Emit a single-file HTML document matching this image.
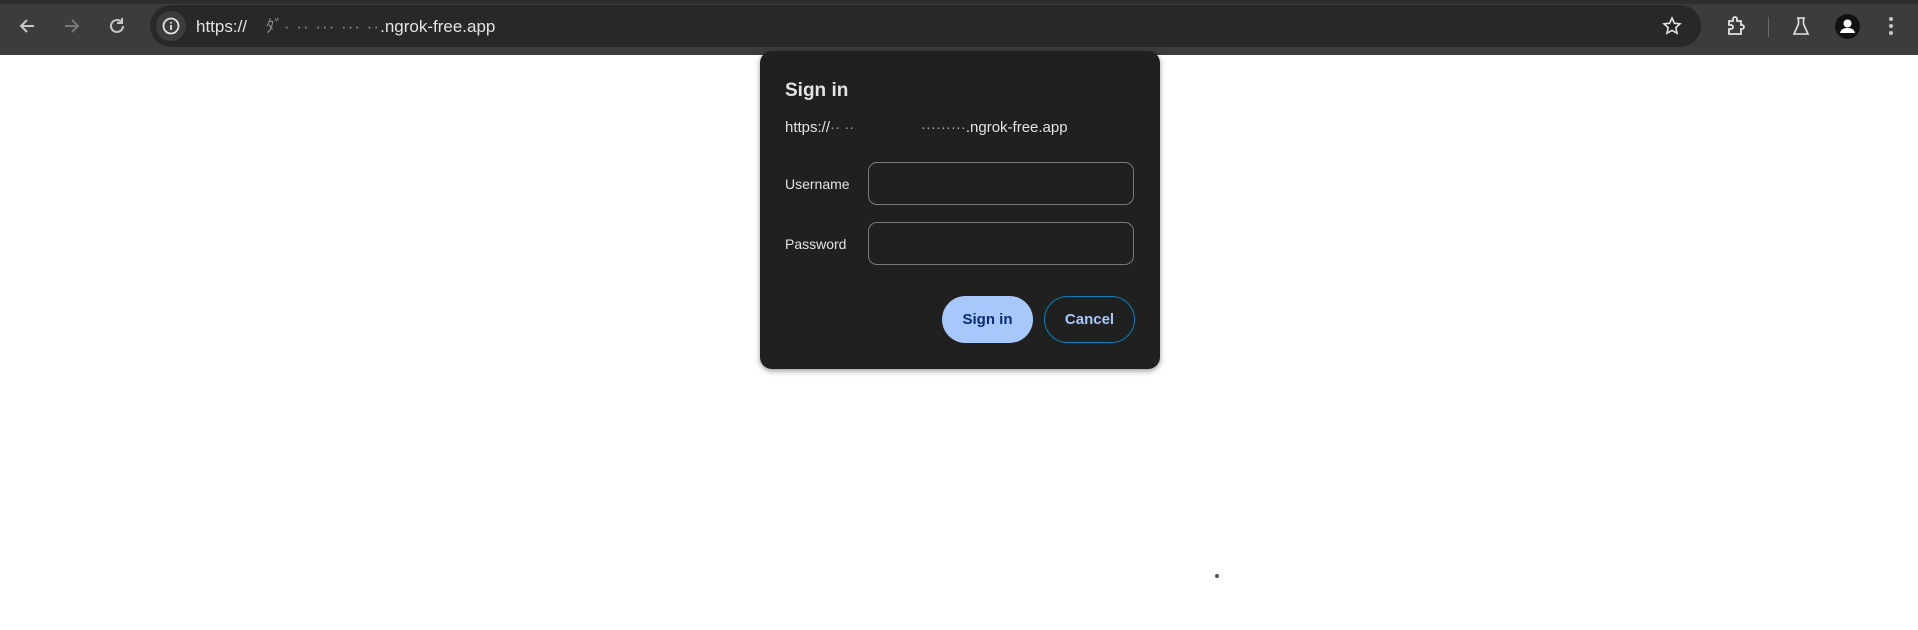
<!DOCTYPE html>
<html><head><style>
*{margin:0;padding:0;box-sizing:border-box}
body{width:1918px;height:630px;background:#fff;font-family:"Liberation Sans",sans-serif;position:relative;overflow:hidden}
.tb{position:absolute;left:0;top:0;width:1918px;height:55px;background:#3c3c3c;border-top:4px solid #2e2e2e}
.omni{position:absolute;left:150px;top:5px;width:1551px;height:42px;border-radius:21px;background:#282828}
.ic{position:absolute}
.url{position:absolute;left:196px;top:12px;font-size:17px;color:#e3e3e3}
.dlg{position:absolute;left:760px;top:51px;width:400px;height:318px;background:#202020;border-radius:12px;box-shadow:0 2px 6px rgba(0,0,0,.4);color:#e3e3e3}
.t{position:absolute;left:25px;top:29px;font-size:19px;font-weight:bold}
.u{position:absolute;left:25px;top:68px;font-size:15px}
.l{position:absolute;left:25px;font-size:14px}
.in{position:absolute;left:108px;width:266px;height:43px;border:1px solid #7a7a7a;border-radius:9px}
.b{position:absolute;top:245px;height:47px;border-radius:24px;font-size:15px;font-weight:bold;display:flex;align-items:center;justify-content:center}
</style></head><body>
<div class="tb"></div>
<div class="omni"></div>
<svg class="ic" style="left:17px;top:16px" width="20" height="20" viewBox="0 0 20 20" fill="none" stroke="#c7c7c7" stroke-width="2"><path d="M17 10H4M10 4l-6 6 6 6"/></svg>
<svg class="ic" style="left:62px;top:16px" width="20" height="20" viewBox="0 0 20 20" fill="none" stroke="#777" stroke-width="2"><path d="M3 10h13M10 4l6 6-6 6"/></svg>
<svg class="ic" style="left:107px;top:16px" width="20" height="20" viewBox="0 0 20 20" fill="none" stroke="#c7c7c7" stroke-width="2"><path d="M16 10a6 6 0 1 1-2-4.5"/><path d="M15 2v5h-5" /></svg>
<div class="ic" style="left:156px;top:11px;width:30px;height:30px;border-radius:50%;background:#3c3c3c"></div>
<svg class="ic" style="left:161px;top:16px" width="20" height="20" viewBox="0 0 20 20" fill="none" stroke="#e3e3e3" stroke-width="1.8"><circle cx="10" cy="10" r="7.5"/><path d="M10 9v5M10 6v1.5"/></svg>
<div class="url">https:// &nbsp;&nbsp;&nbsp;<span style="color:#8a8a8a;letter-spacing:1px">ﾀﾞ· ·· ··· ··· ··</span>.ngrok-free.app</div>
<svg class="ic" style="left:1662px;top:16px" width="20" height="20" viewBox="0 0 20 20" fill="none" stroke="#e3e3e3" stroke-width="1.6"><path d="M10 2l2.4 5.2 5.6.6-4.2 3.8 1.2 5.6L10 14.4 5 17.2l1.2-5.6L2 7.8l5.6-.6z"/></svg>
<svg class="ic" style="left:1725px;top:15px" width="22" height="22" viewBox="0 0 22 22" fill="none" stroke="#e3e3e3" stroke-width="1.8"><path d="M4 6h4V4a2 2 0 0 1 4 0v2h4v4h1a2 2 0 0 1 0 4h-1v5H4v-5h2a2 2 0 0 0 0-4H4z"/></svg>
<div class="ic" style="left:1768px;top:17px;width:1px;height:20px;background:#6a6a6a"></div>
<svg class="ic" style="left:1791px;top:15px" width="20" height="22" viewBox="0 0 20 22" fill="none" stroke="#e3e3e3" stroke-width="1.6"><path d="M6 3h8M7.5 3v6L3 19h14l-4.5-10V3"/></svg>
<div class="ic" style="left:1835px;top:14px;width:25px;height:25px;border-radius:50%;background:#111"></div>
<svg class="ic" style="left:1835px;top:14px" width="25" height="25" viewBox="0 0 25 25" fill="#fff"><circle cx="12.5" cy="9.5" r="4"/><path d="M5 19c1-4 4-5 7.5-5s6.5 1 7.5 5z"/></svg>
<svg class="ic" style="left:1888px;top:15px" width="6" height="22" viewBox="0 0 6 22" fill="#c7c7c7"><circle cx="3" cy="4" r="2"/><circle cx="3" cy="11" r="2"/><circle cx="3" cy="18" r="2"/></svg>
<div class="dlg">
<div class="t">Sign in</div>
<div class="u">https://<span style="color:#8aa">·· ·· &nbsp;&nbsp;&nbsp;</span>&nbsp;&nbsp;&nbsp;&nbsp;&nbsp;&nbsp;&nbsp;&nbsp;&nbsp;&nbsp;&nbsp;&nbsp;<span style="color:#aaa">·········</span>.ngrok-free.app</div>
<div class="l" style="top:125px">Username</div>
<div class="in" style="top:111px"></div>
<div class="l" style="top:185px">Password</div>
<div class="in" style="top:171px"></div>
<div class="b" style="left:182px;width:91px;background:#a8c7fa;color:#062e6f">Sign in</div>
<div class="b" style="left:284px;width:91px;border:1px solid #0b7fb8;color:#a8c7fa">Cancel</div>
</div>
<div class="ic" style="left:1215px;top:574px;width:4px;height:4px;border-radius:50%;background:#555"></div>
</body></html>
